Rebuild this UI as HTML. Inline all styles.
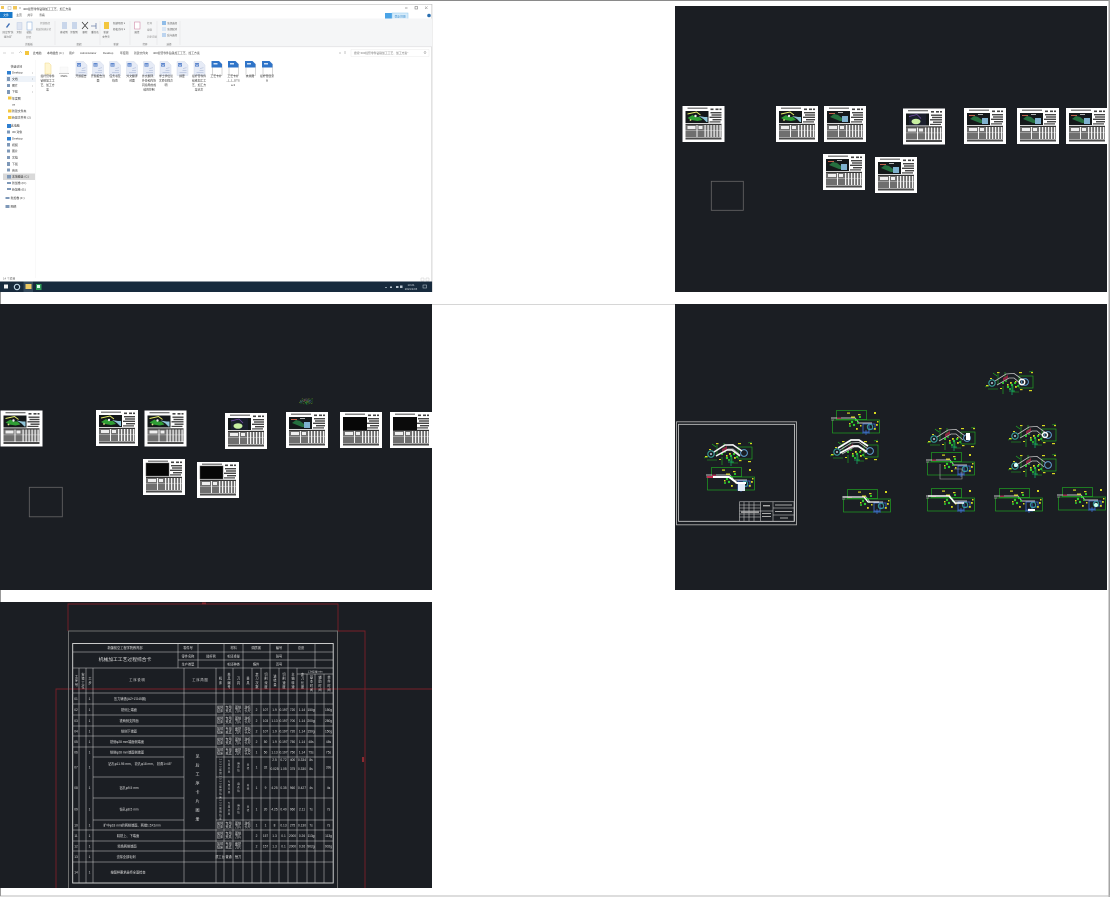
<!DOCTYPE html>
<html lang="zh">
<head>
<meta charset="utf-8">
<title>Screenshot</title>
<style>
html,body{margin:0;padding:0;background:#fff;width:1110px;height:897px;overflow:hidden}
svg{display:block;font-family:"Liberation Sans","Noto Sans CJK SC",sans-serif}
.n text{font-size:2.9px;fill:#333}
.f text{font-size:2.8px;fill:#333;text-anchor:middle}
.t text{fill:#ddd;font-size:3.2px;text-anchor:middle}
.t .s{font-size:2.5px}
.v{writing-mode:vertical-rl;text-anchor:middle;letter-spacing:1px}
</style>
</head>
<body>
<svg width="1110" height="897" viewBox="0 0 1110 897" xmlns="http://www.w3.org/2000/svg">
<defs>
<clipPath id="c2"><rect x="675" y="6" width="432" height="286"/></clipPath>
<clipPath id="c3"><rect x="0" y="304" width="432" height="286"/></clipPath>
<clipPath id="c4"><rect x="675" y="304" width="432" height="286"/></clipPath>
<clipPath id="c5"><rect x="0" y="602" width="432" height="286"/></clipPath>

<g id="card">
<rect width="42" height="36" fill="#fff"/>
<rect x="5" y="1.600" width="20" height="1.200" fill="#666"/>
<rect x="3" y="5" width="23" height="12" fill="#14181a"/>
<g fill="#444"><rect x="28" y="2.500" width="3" height="1.600"/><rect x="33" y="2.500" width="3" height="1.600"/><rect x="37" y="2.500" width="2" height="1.600"/><rect x="28" y="6" width="11" height="1.400"/><rect x="29" y="8.300" width="10" height="1.400"/><rect x="27" y="10.600" width="12" height="1.400"/><rect x="30" y="13" width="9" height="1.400"/><rect x="27" y="15.300" width="11" height="1.200"/></g>
<rect x="3" y="17.800" width="36" height="1.200" fill="#333"/>
<rect x="3" y="19" width="36" height="12" fill="#6f6f6f"/>
<rect x="5" y="20" width="8" height="3" fill="#eee"/><rect x="16" y="20" width="4" height="3" fill="#eee"/>
<g fill="#f4f4f4"><rect x="14" y="19" width="1" height="12"/><rect x="22" y="19" width="1.200" height="12"/><rect x="25" y="19" width="1.200" height="12"/><rect x="28" y="19" width="1.200" height="12"/><rect x="31" y="19" width="1.200" height="12"/><rect x="34" y="19" width="1.200" height="12"/><rect x="37" y="19" width="1.200" height="12"/><rect x="3" y="24" width="36" height=".7" opacity=".5"/></g>
<rect x="3" y="31.500" width="36" height="2" fill="#4a4a4a"/>
</g>
<g id="pa"><path d="M5 12l5-3 3 2 4 0 3 3-5 1-6-1z" fill="#2f9e35"/><path d="M5 8l9-2 4 3" stroke="#e6ef6a" stroke-width=".9" fill="none"/><path d="M16 10l5 3 3 3h1v-5h-3z" fill="#8fc4d8"/><circle cx="13" cy="10" r="1.200" fill="#eee"/><circle cx="8" cy="14" r=".9" fill="#dfe88a"/></g>
<g id="pb"><path d="M6 11l4-3 4 1 4 3 3 3h-5l-5-2z" fill="#25703f"/><rect x="18" y="10" width="6" height="6" fill="#7fb1cf"/><rect x="5" y="7" width="6" height="1" fill="#c0604a"/><rect x="14" y="6" width="5" height=".8" fill="#d8d8d8"/></g>
<g id="pc"><rect x="6" y="5" width="17" height="12" fill="#1b1f2d"/><ellipse cx="13" cy="13" rx="4.500" ry="2.800" fill="#c7eea0"/><path d="M6 8l8-2 4 4" stroke="#7a4fb0" fill="none" stroke-width=".7"/></g>

<g id="arm">
<g fill="none" stroke="#22b722" stroke-width=".6">
<rect x="34" y="6" width="14" height="12"/>
<path d="M3 19h10M13 4v10M18 16v8M8 3l4 3M44 2l4-1M0 17l4-1M20 2v6M28 16v6h6"/>
</g>
<path d="M10 11L21 4l8-.6L38 10M12 15l12-7h5l7 6" fill="none" stroke="#c2c2c2" stroke-width=".8"/>
<path d="M18 8l5-3v3l-5 3z" fill="#8a2440"/>
<circle cx="7" cy="13" r="3.200" fill="none" stroke="#3aa8a0" stroke-width="1"/><circle cx="7" cy="13" r="1" fill="#bcd"/>
<circle cx="40" cy="12" r="3.400" fill="none" stroke="#5f9fd0" stroke-width="1"/>
<g fill="#d8d820"><rect x="1" y="15" width="2.500" height="1.200"/><rect x="12" y="2" width="2.500" height="1.200"/><rect x="34" y="2" width="3" height="1.200"/><rect x="44" y="20" width="3" height="1.200"/><rect x="25" y="12" width="1.800" height="1.800"/><rect x="30" y="16" width="1.800" height="1.800"/><rect x="22" y="14" width="1.600" height="1.600"/><rect x="46" y="2" width="2" height="1.200"/><rect x="35" y="19" width="2.500" height="1.200"/><rect x="5" y="8" width="2" height="1"/><rect x="30" y="11" width="1.500" height="1.500"/><rect x="15" y="18" width="2" height="1"/></g>
<g fill="#2fd02f"><circle cx="23" cy="17" r="1.200"/><circle cx="27" cy="15" r="1.200"/><circle cx="18" cy="13" r="1.100"/><circle cx="30" cy="13" r="1.100"/><circle cx="25" cy="19" r="1"/><circle cx="33" cy="16" r="1"/><circle cx="21" cy="11" r=".9"/></g>
<path d="M27 14v11M24 21h6" stroke="#16a86a" stroke-width=".8"/>
</g>
<g id="side">
<g fill="none" stroke="#22b722" stroke-width=".6">
<rect x="4.500" y=".5" width="30" height="9"/><rect x=".5" y="10" width="47" height="13"/>
</g>
<path d="M-1 8h24l4 5h13" fill="none" stroke="#c2c2c2" stroke-width=".9"/>
<path d="M-1 10h3" stroke="#bbb" stroke-width=".6"/>
<rect x="5" y="7.500" width="4" height="1.500" fill="#a03050"/>
<path d="M31 14h6v8h-6zM37 14h6v5h-6z" fill="none" stroke="#3f6fd8" stroke-width=".8"/>
<circle cx="38" cy="17" r="2.700" fill="none" stroke="#38a8a0" stroke-width=".9"/>
<g fill="#d8d820"><rect x="15" y="2.500" width="3" height="1.200"/><rect x="19" y="6.500" width="4" height="1.200"/><rect x="42" y="2" width="2" height="2"/><rect x="26" y="4" width="2.500" height="1.200"/><rect x="44" y="14" width="1.800" height="1.800"/><rect x="42" y="18" width="1.800" height="1.800"/><rect x="24" y="18" width="1.800" height="1.800"/><rect x="28" y="15" width="1.500" height="1.500"/><rect x="17" y="13" width="1.500" height="1.500"/><rect x="45" y="11" width="1.500" height="1.500"/></g>
<g fill="#2fd02f"><circle cx="20" cy="12" r="1.200"/><circle cx="24" cy="10" r="1.200"/><circle cx="22" cy="15" r="1.200"/><circle cx="28" cy="7" r="1.100"/><circle cx="26" cy="13" r="1"/><circle cx="18" cy="16" r="1"/></g>
<path d="M34 20v5M30 23h8" stroke="#3f6fd8" stroke-width=".7"/>
</g>
<g id="doc">
<path d="M0 0h7.500l3.500 3.500V14H0z" fill="#e6ebf6" stroke="#ccd3e4" stroke-width=".4"/>
<rect x="1" y="1.500" width="4" height="3.600" fill="#5c85cc"/><path d="M1.600 2.300l.7 2.200.7-1.500.7 1.500.6-2.200" stroke="#fff" stroke-width=".3" fill="none"/>
<path d="M6 7l3.500-.8M5.500 9h4M2.500 11h7" stroke="#b7c2dc" stroke-width=".7"/>
</g>
<g id="wps">
<path d="M1 3h9.500v11.500H1z" fill="#fff" stroke="#999" stroke-width=".4"/>
<path d="M0 0h7.500l3 3v3.500H0z" fill="#2f74c8"/><rect x="2" y="2" width="4" height="1.500" fill="#cfe2f7"/>
</g>
</defs>

<rect width="1110" height="897" fill="#fff"/>
<rect x="0" y="0" width="1110" height="1" fill="#8a8a8a"/>
<rect x="1108.500" y="0" width="1.500" height="897" fill="#a5a5a5"/>
<rect x="0" y="895.500" width="1110" height="1" fill="#bbb"/>
<rect x="0" y="292" width="1" height="604" fill="#999"/>
<rect x="0" y="304" width="675" height=".8" fill="#999" opacity=".5"/>

<!-- EXPLORER -->
<g>
<rect x="0" y="4" width="432" height="288" fill="#fff"/>
<rect x="431.500" y="4" width=".8" height="278" fill="#c5c5c5"/>
<rect x="0" y="4" width="432" height=".6" fill="#bdbdbd"/>
<rect x="1" y="6" width="3" height="3" fill="#f1c75a"/><rect x="8" y="6.500" width="3" height="3" fill="none" stroke="#aaa" stroke-width=".5"/><rect x="13" y="6" width="4" height="3.500" fill="#f1c75a"/><path d="M19 8h2" stroke="#777" stroke-width=".6"/>
<text x="23" y="10" font-size="2.900" fill="#333">400摇臂零件钻铣加工工艺、加工方案</text>
<path d="M405 8h2.500" stroke="#666" stroke-width=".6"/><rect x="415" y="6.500" width="2.500" height="2.500" fill="none" stroke="#666" stroke-width=".5"/><path d="M425 6.500l2.500 2.500m0-2.500l-2.500 2.500" stroke="#666" stroke-width=".5"/>
<rect x="0" y="12" width="12.500" height="6" fill="#1979ca"/>
<text x="6" y="16" font-size="2.800" fill="#fff" text-anchor="middle">文件</text>
<g font-size="2.800" fill="#444" text-anchor="middle"><text x="19" y="16">主页</text><text x="30" y="16">共享</text><text x="42" y="16">查看</text></g>
<rect x="385" y="13" width="7" height="7" fill="#4aa3e6"/><rect x="392" y="13" width="16" height="7" fill="#d6ecfb" stroke="#8cc7ee" stroke-width=".5"/>
<text x="400" y="17.500" font-size="2.600" fill="#2a82c8" text-anchor="middle">登录/注册</text>
<circle cx="429" cy="15.500" r="1.800" fill="#2a6fb0"/>
<rect x="0" y="18.500" width="432" height="28" fill="#f5f6f7"/>
<rect x="0" y="46.500" width="432" height=".6" fill="#dadbdc"/>
<g stroke="#e0e1e2" stroke-width=".5"><path d="M55 21v24M100 21v24M130 21v24M157 21v24M180 21v24"/></g>
<path d="M6 27l3-4 1 1-3 4z" fill="#3f6fb5"/>
<rect x="17" y="22.500" width="5" height="7" fill="#dfe5f1" stroke="#b5c4de" stroke-width=".4"/>
<rect x="27" y="22" width="5" height="8" fill="#fff" stroke="#7ea3d6" stroke-width=".5"/>
<g font-size="2.500" fill="#666" text-anchor="middle"><text x="8" y="33">固定到"快</text><text x="8" y="37.500">速访问"</text><text x="19" y="33">复制</text><text x="29" y="33">粘贴</text></g>
<g font-size="2.500" fill="#888"><text x="40" y="24">复制路径</text><text x="36" y="30">粘贴快捷方式</text><text x="26" y="38">剪切</text></g>
<rect x="62" y="22" width="5" height="7" fill="#c9d6ea"/><rect x="72" y="22" width="5" height="7" fill="#c9d6ea"/>
<path d="M82 22l6 7m0-7l-6 7" stroke="#333" stroke-width=".7"/><path d="M91 26h5m0-3v6" stroke="#6b7fa8" stroke-width=".8"/>
<g font-size="2.500" fill="#555" text-anchor="middle"><text x="64" y="33">移动到</text><text x="74" y="33">复制到</text><text x="85" y="33">删除</text><text x="95" y="33">重命名</text></g>
<rect x="104" y="22" width="5" height="7" fill="#f3c63e"/>
<g font-size="2.500" fill="#555" text-anchor="middle"><text x="106" y="33">新建</text><text x="106" y="37.500">文件夹</text></g>
<g font-size="2.500" fill="#555"><text x="113" y="24">新建项目 ▾</text><text x="113" y="30">轻松访问 ▾</text></g>
<rect x="134.500" y="22" width="5.500" height="7" fill="#fff" stroke="#c79" stroke-width=".5"/>
<text x="137" y="33" font-size="2.500" fill="#555" text-anchor="middle">属性</text>
<g font-size="2.500" fill="#888"><text x="147" y="24">打开</text><text x="147" y="30.500">编辑</text><text x="147" y="37.500">历史记录</text></g>
<rect x="162" y="21" width="4" height="4" fill="#8fbce8"/><rect x="162" y="27" width="4" height="4" fill="#d8e5f4"/><rect x="162" y="33" width="4" height="4" fill="#bcd4ef"/>
<g font-size="2.500" fill="#555"><text x="167" y="24">全部选择</text><text x="167" y="30">全部取消</text><text x="167" y="36">反向选择</text></g>
<g font-size="2.500" fill="#666" text-anchor="middle"><text x="29" y="45">剪贴板</text><text x="79" y="45">组织</text><text x="116" y="45">新建</text><text x="145" y="45">打开</text><text x="169" y="45">选择</text></g>
<path d="M3 53h3M11 53h3M19 53l1.500-1.500 1.500 1.500" stroke="#aaa" stroke-width=".5" fill="none"/>
<rect x="25" y="51" width="4" height="4" fill="#f3c63e"/>
<g font-size="2.800" fill="#444"><text x="33" y="54">此电脑</text><text x="47" y="54">本地磁盘 (C:)</text><text x="69" y="54">用户</text><text x="80" y="54">Administrator</text><text x="103" y="54">Desktop</text><text x="120" y="54">年度图</text><text x="134" y="54">新建文件夹</text><text x="153" y="54">400摇臂零件钻铣加工工艺、加工方案</text></g>
<path d="M339 53h2M345 51v3" stroke="#888" stroke-width=".5"/>
<rect x="351" y="49.500" width="78" height="7" fill="#fff" stroke="#e5e5e5" stroke-width=".4"/>
<text x="354" y="54" font-size="2.800" fill="#777">搜索"400摇臂零件钻铣加工工艺、加工方案"</text>
<circle cx="425" cy="52.500" r="1" fill="none" stroke="#777" stroke-width=".4"/>
<!-- nav -->
<rect x="3" y="173.500" width="32" height="6.500" fill="#d9d9d9"/>
<rect x="6" y="76" width="30" height="6" fill="#eef3f9"/>
<g fill="#2f7fd0"><rect x="7" y="71" width="4" height="3.500"/><rect x="7" y="124" width="4" height="4"/><rect x="7" y="137" width="4" height="3.500"/></g>
<g fill="#f3c63e"><rect x="8" y="96.500" width="3.500" height="3"/><rect x="8" y="109.500" width="3.500" height="3"/><rect x="8" y="116" width="3.500" height="3"/></g>
<g fill="#7e98b8"><rect x="7" y="77" width="3" height="4"/><rect x="7" y="84" width="3" height="3"/><rect x="7" y="90" width="3" height="4"/><rect x="7" y="130.500" width="3" height="3"/><rect x="7" y="143" width="3" height="3.500"/><rect x="7" y="149.500" width="3" height="3"/><rect x="7" y="156" width="3" height="3"/><rect x="7" y="162" width="3" height="4"/><rect x="7" y="168.500" width="3" height="3"/><rect x="7" y="175" width="4" height="3.500"/><rect x="7" y="182" width="4" height="2"/><rect x="7" y="188" width="4" height="2"/><rect x="5.500" y="197" width="4" height="2"/><rect x="5.500" y="205" width="4" height="3"/></g>
<g class="n">
<text x="10.600" y="67.300">快速访问</text><text x="12" y="73.700">Desktop</text><text x="12" y="80">文档</text><text x="12" y="86.300">图片</text><text x="12" y="92.700">下载</text><text x="12" y="99.300">年度图</text><text x="12" y="105.700">os</text><text x="12" y="112">新建文件夹</text><text x="12" y="118.300">新建文件夹 (2)</text>
<text x="11" y="126.700">此电脑</text><text x="12" y="133">3D 对象</text><text x="12" y="139.700">Desktop</text><text x="12" y="146">视频</text><text x="12" y="152">图片</text><text x="12" y="158.700">文档</text><text x="12" y="165">下载</text><text x="12" y="171.300">音乐</text><text x="12" y="177.700">本地磁盘 (C:)</text><text x="12" y="184">新加卷 (D:)</text><text x="12" y="190.300">新加卷 (E:)</text><text x="10.600" y="199">新加卷 (F:)</text><text x="10.600" y="207.300">网络</text>
</g>
<path d="M32 72l1 1-1 1M32 78l1 1-1 1M32 85l1 1-1 1M32 91l1 1-1 1" stroke="#999" stroke-width=".3" fill="none"/>
<rect x="35.500" y="60" width=".4" height="218" fill="#f0f0f0"/>
<!-- file icons -->
<path d="M45 63h4l2 2v9h-6z" fill="#fff6d2" stroke="#efd88a" stroke-width=".5"/>
<rect x="59" y="73" width="10" height=".7" fill="#aaa"/><rect x="60" y="67" width="8" height="6" fill="#fafafa" stroke="#eee" stroke-width=".3"/>
<use href="#doc" x="76" y="61.500"/><use href="#doc" x="92.500" y="61.500"/><use href="#doc" x="109.500" y="61.500"/><use href="#doc" x="126.500" y="61.500"/><use href="#doc" x="143.500" y="61.500"/><use href="#doc" x="160" y="61.500"/><use href="#doc" x="177" y="61.500"/><use href="#doc" x="194" y="61.500"/>
<use href="#wps" x="211.500" y="61"/><use href="#wps" x="228" y="61"/><use href="#wps" x="245" y="61"/><use href="#wps" x="262" y="61"/>
<g class="f">
<text x="47.500" y="77">摇杆臂零件</text><text x="47.500" y="81.500">钻铣加工工</text><text x="47.500" y="86">艺、加工方</text><text x="47.500" y="90.500">案</text>
<text x="64" y="77">DWG</text>
<text x="81" y="77">开题报告</text>
<text x="98" y="77">开题报告封</text><text x="98" y="81.500">面</text>
<text x="115" y="77">任务书及</text><text x="115" y="81.500">指南</text>
<text x="132" y="77">外文翻译</text><text x="132" y="81.500">封面</text>
<text x="149" y="77">外文翻译、</text><text x="149" y="81.500">外协和内协</text><text x="149" y="86">同指导的成</text><text x="149" y="90.500">绩的控制</text>
<text x="166" y="77">学士学位论</text><text x="166" y="81.500">文原创性声</text><text x="166" y="86">明</text>
<text x="182" y="77">摘要</text>
<text x="199" y="77">摇杆臂零件</text><text x="199" y="81.500">钻铣加工工</text><text x="199" y="86">艺、加工方</text><text x="199" y="90.500">案论文</text>
<text x="216" y="77">工艺卡片</text>
<text x="233" y="77">工艺卡片</text><text x="233" y="81.500">_1_1_DTS</text><text x="233" y="86">a-3</text>
<text x="250" y="77">夹具图</text>
<text x="267" y="77">摇杆臂目录</text><text x="267" y="81.500">B</text>
</g>
<text x="3" y="279.500" font-size="2.800" fill="#666">14 个项目</text>
<path d="M421 278h3v3h-3zM426 278h3v3h-3z" fill="none" stroke="#bbb" stroke-width=".4"/>
<!-- taskbar -->
<rect x="0" y="281.500" width="432" height="10.500" fill="#172a3d"/>
<rect x="23.500" y="281.500" width="9.500" height="10.500" fill="#33495c"/>
<rect x="4" y="284.500" width="4" height="4" fill="#f2f2f2"/>
<circle cx="17" cy="287" r="2.700" fill="none" stroke="#cfe6f5" stroke-width="1"/>
<rect x="25.500" y="284" width="6" height="5" fill="#ecc964"/>
<rect x="36" y="284" width="5.500" height="6" fill="#2e9a58"/><rect x="37" y="285" width="3" height="3" fill="#dfe"/>
<g fill="#b9c4cf"><rect x="385" y="287" width="2" height=".7"/><rect x="390" y="286.500" width="2" height="1.500"/><rect x="396" y="286" width="2.500" height="2"/><rect x="400" y="285.500" width="2.500" height="2.500"/></g>
<text x="411" y="286" font-size="2.800" fill="#d5dde4" text-anchor="middle">13:21</text>
<text x="411" y="290" font-size="2.800" fill="#d5dde4" text-anchor="middle">2021/1/15</text>
<rect x="423" y="285" width="3.500" height="3" fill="none" stroke="#c5d0da" stroke-width=".5"/>
<rect x="432" y="281.500" width=".6" height="10.500" fill="#ccc"/>
</g>

<!-- PANEL 2 -->
<rect x="675" y="6" width="432" height="286" fill="#1b1e23"/>
<g clip-path="url(#c2)">
<rect x="711.300" y="181.300" width="32" height="29" fill="none" stroke="#666" stroke-width=".8"/>
<use href="#card" x="682.500" y="106"/><use href="#pa" x="682.500" y="106"/>
<use href="#card" x="776" y="106"/><use href="#pa" x="776" y="106"/>
<use href="#card" x="824" y="106"/><use href="#pb" x="824" y="106"/>
<use href="#card" x="903" y="108.500"/><use href="#pc" x="903" y="108.500"/>
<use href="#card" x="964" y="108"/><use href="#pb" x="964" y="108"/>
<use href="#card" x="1017" y="108"/><use href="#pb" x="1017" y="108"/>
<use href="#card" x="1066" y="108"/><use href="#pb" x="1066" y="108"/>
<use href="#card" x="823" y="154"/><use href="#pb" x="823" y="154"/>
<use href="#card" x="875" y="157"/><use href="#pb" x="875" y="157"/>
</g>

<!-- PANEL 3 -->
<rect x="0" y="304" width="432" height="286" fill="#1b1e23"/>
<g clip-path="url(#c3)">
<rect x="29.300" y="487.300" width="33" height="29.500" fill="none" stroke="#666" stroke-width=".8"/>
<use href="#card" x="0.500" y="410.500"/><use href="#pa" x="0.500" y="410.500"/>
<use href="#card" x="96" y="410"/><use href="#pa" x="96" y="410"/>
<use href="#card" x="144.500" y="410.500"/><use href="#pa" x="144.500" y="410.500"/>
<use href="#card" x="225" y="413"/><use href="#pc" x="225" y="413"/>
<use href="#card" x="286" y="412"/><use href="#pb" x="286" y="412"/>
<use href="#card" x="340" y="412"/><rect x="343" y="417" width="24" height="13" fill="#070707"/>
<use href="#card" x="390" y="412"/><rect x="393" y="417" width="24" height="13" fill="#0b0b0b"/>
<use href="#card" x="143" y="459"/><rect x="146" y="463" width="23" height="13" fill="#070707" stroke="#555" stroke-width=".5"/>
<use href="#card" x="197" y="462"/><rect x="200" y="466" width="23" height="13" fill="#070707" stroke="#555" stroke-width=".5"/>
<g transform="translate(299 398) scale(.28)"><use href="#arm"/></g>
</g>

<!-- PANEL 4 -->
<rect x="675" y="304" width="432" height="286" fill="#1b1e23"/>
<g clip-path="url(#c4)">
<rect x="676.500" y="421.800" width="120" height="103" fill="none" stroke="#aaa" stroke-width=".9"/>
<rect x="678.500" y="424.300" width="116" height="97" fill="none" stroke="#d4d4d4" stroke-width=".8"/>
<use href="#arm" x="704" y="441"/>
<path d="M714 452l11-7h8l9 6M716 456l11-6h5l8 6" fill="none" stroke="#f2f2f2" stroke-width="1.500"/>
<use href="#side" x="707" y="467"/>
<path d="M707 477h22l8 6h9" fill="none" stroke="#fff" stroke-width="2"/>
<rect x="707" y="476" width="6" height="2" fill="#c03050"/>
<rect x="738" y="484" width="7" height="7" fill="#dfe9f5"/>
<g stroke="#ddd" stroke-width=".5" fill="none">
<rect x="739.500" y="501.800" width="54.500" height="19.500"/>
<path d="M739.500 505h21M739.500 508h21M739.500 511h21M739.500 514h21M739.500 517h21M744 501.800v19.500M749 501.800v19.500M754 501.800v19.500M760.500 501.800v19.500M773 501.800v19.500M773 508h21M773 515h21M760.500 511h12.500"/>
</g>
<g fill="#aaa"><rect x="775" y="504.500" width="17" height="1"/><rect x="775" y="511" width="17" height="1"/><rect x="780" y="517.500" width="8" height="1"/><rect x="763" y="505" width="7" height="1.400"/><rect x="762" y="513" width="9" height="1"/><rect x="762" y="516" width="9" height="1"/><rect x="741" y="511.500" width="18" height="1.400"/></g>
<use href="#arm" x="985" y="370"/><circle cx="1022" cy="382" r="2.700" fill="none" stroke="#fff" stroke-width="1.500"/>
<use href="#arm" x="927" y="426"/><rect x="966" y="433" width="4" height="7" fill="#fff"/>
<use href="#arm" x="1008" y="423"/><circle cx="1045" cy="435" r="2.500" fill="none" stroke="#fff" stroke-width="1.500"/>
<use href="#arm" x="1008" y="453"/><circle cx="1016" cy="465" r="2" fill="#dff"/>
<use href="#arm" x="830" y="439"/>
<path d="M838 448l13-8h8l9 6M840 453l13-7h5l9 6" fill="none" stroke="#fff" stroke-width="1.800"/>
<use href="#side" x="832" y="410"/>
<use href="#side" x="927" y="452"/><path d="M940 464v15h22v-10h-8" fill="none" stroke="#aaa" stroke-width=".6"/>
<use href="#side" x="843" y="489"/><path d="M843 497h21l4 5h11" fill="none" stroke="#fff" stroke-width="1.300"/>
<use href="#side" x="927" y="488"/><path d="M928 496h21l6 7h9" fill="none" stroke="#fff" stroke-width="1.500"/>
<use href="#side" x="995" y="488"/><rect x="1028" y="509" width="7" height="2" fill="#fff"/>
<use href="#side" x="1058" y="487"/><circle cx="1096" cy="505" r="2" fill="#cfe"/>
</g>

<!-- PANEL 5 -->
<rect x="0" y="602" width="432" height="286" fill="#1b1e23"/>
<g clip-path="url(#c5)">
<g fill="none" stroke="#7a2028" stroke-width=".9">
<path d="M68 631V604H338V631H365V888"/>
<path d="M56 888V689H432"/>
</g>
<rect x="202" y="602.500" width="4" height="2" fill="#8a2a30"/>
<rect x="362" y="757" width="2" height="5" fill="#8a2a30"/>
<rect x="68.500" y="631" width="269" height="258" fill="none" stroke="#777" stroke-width=".9"/>
<rect x="72.700" y="643.500" width="260.500" height="239.500" fill="none" stroke="#ddd" stroke-width=".9"/>
<g stroke="#cfcfcf" stroke-width=".5" fill="none">
<path d="M72.700 652H178M178 652h155M178 660h155M72.700 668H333"/>
<path d="M178 643.500V668M198 643.500V668M224 643.500V668M243 643.500V668M270 643.500V668M288 643.500V668M315 643.500V668"/>
<path d="M72.700 693H333M72.700 704H333M72.700 715H333M72.700 726H333M72.700 736H333M72.700 747H333M93 757H184M216 757H333M93 777H184M216 777H333M93 798H184M216 798H333M93 820H184M216 820H333M72.700 830H333M72.700 841H333M72.700 851H333M72.700 862H333"/>
<path d="M79 668V883M86 668V883M93 668V883M184 668V883M216 668V883M224 668V883M233 668V883M243 668V883M252 668V883M261 668V883M270 668V883M279 668V883M288 668V883M297 668V883M307 674V883M315 674V883M324 674V883"/>
<path d="M297 674H333"/>
</g>
<g class="t">
<text x="125" y="649">新疆航空工程学院教育部</text>
<text x="125" y="661" style="font-size:4.800px">机械加工工艺过程综合卡</text>
<text x="188" y="649">零件号</text><text x="188" y="657.500">零件名称</text><text x="188" y="665.500">生产类型</text>
<text x="211" y="657.500">摇杆臂</text>
<text x="233.500" y="649">材料</text><text x="233.500" y="657.500">毛坯重量</text><text x="233.500" y="665.500">毛坯种类</text>
<text x="256" y="649">调质钢</text><text x="256" y="665.500">铸件</text>
<text x="279" y="649">編号</text><text x="279" y="657.500">张号</text><text x="279" y="665.500">页号</text>
<text x="301" y="649">总张</text>
<text x="137" y="681">工 序 说 明</text><text x="200" y="681">工 序 简 图</text>
<text x="315" y="672.500" class="s">工时定额 min</text>
<text class="v" x="76" y="681">工序号</text><text class="v" x="82.500" y="681">安装工位</text><text class="v" x="89.500" y="681">工步</text>
<text class="v" x="220" y="681">机床</text><text class="v" x="228.500" y="681">夹具编号</text><text class="v" x="238" y="681">刀具</text><text class="v" x="247.500" y="681">量具</text>
<text class="v" x="256.500" y="681">走刀次数</text><text class="v" x="265.500" y="681">切削深度</text><text class="v" x="274.500" y="681">进给量</text><text class="v" x="283.500" y="681">切削速度</text><text class="v" x="292.500" y="681">主轴转速</text><text class="v" x="302" y="681">走刀长度</text>
<text class="v" x="311" y="684">基本时间</text><text class="v" x="319.500" y="684">辅助时间</text><text class="v" x="328.500" y="684">单件时间</text>
<text class="v" x="198" y="790" style="letter-spacing:5px;font-size:4px">见后工序卡片图册</text>

<text x="76" y="700">01</text><text x="89.500" y="700">1</text><text x="130" y="700">压力铸造(AZ+ZG45钢)</text>
<text x="76" y="711">02</text><text x="89.500" y="711">1</text><text x="129" y="711">铣侧上端面</text>
<text x="76" y="722">03</text><text x="89.500" y="722">1</text><text x="129" y="722">铣两侧支撑面</text>
<text x="76" y="732.500">04</text><text x="89.500" y="732.500">1</text><text x="129" y="732.500">铣侧下端面</text>
<text x="76" y="743">05</text><text x="89.500" y="743">1</text><text x="127" y="743">铣侧φ28 mm端面侧端面</text>
<text x="76" y="753.500">06</text><text x="89.500" y="753.500">1</text><text x="127" y="753.500">铣侧φ28 mm端面侧端面</text>
<text x="76" y="768.500">07</text><text x="89.500" y="768.500">1</text><text x="140" y="765">钻孔φ11.95 mm、 铰孔φ18 mm、 铰角1×45°</text>
<text x="76" y="789">08</text><text x="89.500" y="789">1</text><text x="129" y="789">钻孔φ9.5 mm</text>
<text x="76" y="810.500">09</text><text x="89.500" y="810.500">1</text><text x="129" y="810.500">钻孔φ8.5 mm</text>
<text x="76" y="826.500">10</text><text x="89.500" y="826.500">1</text><text x="132" y="826.500">扩中φ18 mm的两侧端面、两端1.5X1mm</text>
<text x="76" y="837">11</text><text x="89.500" y="837">1</text><text x="128" y="837">精铣上、下端面</text>
<text x="76" y="847.500">12</text><text x="89.500" y="847.500">1</text><text x="127" y="847.500">精铣两侧端面</text>
<text x="76" y="858">13</text><text x="89.500" y="858">1</text><text x="126" y="858">去除全部毛刺</text>
<text x="76" y="873.500">14</text><text x="89.500" y="873.500">1</text><text x="128" y="873.500">按图样要求最终全面检查</text>

<g class="s">
<text x="220" y="708.500">摇臂</text><text x="220" y="712">钻床</text><text x="228.500" y="708.500">专用</text><text x="228.500" y="712">夹具</text><text x="238" y="708.500">面铣</text><text x="238" y="712">刀片</text><text x="247.500" y="708.500">游标</text><text x="247.500" y="712">卡尺</text>
<text x="220" y="719.500">摇臂</text><text x="220" y="723">钻床</text><text x="228.500" y="719.500">专用</text><text x="228.500" y="723">夹具</text><text x="238" y="719.500">面铣</text><text x="238" y="723">刀片</text><text x="247.500" y="719.500">游标</text><text x="247.500" y="723">卡尺</text>
<text x="220" y="730">摇臂</text><text x="220" y="733.500">钻床</text><text x="228.500" y="730">专用</text><text x="228.500" y="733.500">夹具</text><text x="238" y="730">面铣</text><text x="238" y="733.500">刀片</text><text x="247.500" y="730">游标</text><text x="247.500" y="733.500">卡尺</text>
<text x="220" y="740.500">摇臂</text><text x="220" y="744">钻床</text><text x="228.500" y="740.500">专用</text><text x="228.500" y="744">夹具</text><text x="238" y="740.500">面铣</text><text x="238" y="744">刀片</text><text x="247.500" y="740.500">游标</text><text x="247.500" y="744">卡尺</text>
<text x="220" y="751">摇臂</text><text x="220" y="754.500">钻床</text><text x="228.500" y="751">专用</text><text x="228.500" y="754.500">夹具</text><text x="238" y="751">面铣</text><text x="238" y="754.500">刀片</text><text x="247.500" y="751">游标</text><text x="247.500" y="754.500">卡尺</text>
<text x="220" y="834.500">摇臂</text><text x="220" y="838">钻床</text><text x="228.500" y="834.500">专用</text><text x="228.500" y="838">夹具</text><text x="238" y="834.500">面铣</text><text x="238" y="838">刀片</text>
<text x="220" y="845">摇臂</text><text x="220" y="848.500">钻床</text><text x="228.500" y="845">专用</text><text x="228.500" y="848.500">夹具</text><text x="238" y="845">面铣</text><text x="238" y="848.500">刀片</text>
<text x="220" y="858">质工台</text><text x="228.500" y="858">普通</text><text x="238" y="858">锉刀</text>
<text x="220" y="824.500">摇臂</text><text x="220" y="828">钻床</text><text x="228.500" y="824.500">专用</text><text x="228.500" y="828">夹具</text><text x="238" y="824.500">面铣</text><text x="238" y="828">刀片</text><text x="247.500" y="824.500">游标</text><text x="247.500" y="828">卡尺</text>
</g>
<text class="v s" x="220" y="767">Z535摇臂</text><text class="v s" x="228.500" y="767">专用夹具</text><text class="v s" x="238" y="767">麻花钻</text><text class="v s" x="247.500" y="767">内径</text>
<text class="v s" x="220" y="787.500">Z535摇臂钻床</text><text class="v s" x="228.500" y="787.500">专用夹具</text><text class="v s" x="238" y="787.500">麻花钻</text><text class="v s" x="247.500" y="787.500">内径</text>
<text class="v s" x="220" y="809">Z535摇臂钻床</text><text class="v s" x="228.500" y="809">专用夹具</text><text class="v s" x="238" y="809">麻花钻</text><text class="v s" x="247.500" y="809">内径</text>

<g class="s">
<text x="256.500" y="711">2</text><text x="265.500" y="711">107</text><text x="274.500" y="711">1.9</text><text x="283.500" y="711">0.197</text><text x="292.500" y="711">720</text><text x="302" y="711">1.14</text><text x="311" y="711">150g</text><text x="328.500" y="711">150g</text>
<text x="256.500" y="722">2</text><text x="265.500" y="722">103</text><text x="274.500" y="722">1.13</text><text x="283.500" y="722">0.197</text><text x="292.500" y="722">700</text><text x="302" y="722">1.14</text><text x="311" y="722">200g</text><text x="328.500" y="722">280g</text>
<text x="256.500" y="732.500">2</text><text x="265.500" y="732.500">107</text><text x="274.500" y="732.500">1.9</text><text x="283.500" y="732.500">0.197</text><text x="292.500" y="732.500">720</text><text x="302" y="732.500">1.14</text><text x="311" y="732.500">150g</text><text x="328.500" y="732.500">150g</text>
<text x="256.500" y="743">2</text><text x="265.500" y="743">50</text><text x="274.500" y="743">1.9</text><text x="283.500" y="743">0.197</text><text x="292.500" y="743">750</text><text x="302" y="743">1.14</text><text x="311" y="743">48s</text><text x="328.500" y="743">48s</text>
<text x="256.500" y="753.500">1</text><text x="265.500" y="753.500">50</text><text x="274.500" y="753.500">1.13</text><text x="283.500" y="753.500">0.197</text><text x="292.500" y="753.500">750</text><text x="302" y="753.500">1.14</text><text x="311" y="753.500">75s</text><text x="328.500" y="753.500">75s</text>
<text x="256.500" y="768.500">1</text><text x="265.500" y="768.500">32</text><text x="274.500" y="761">2.5</text><text x="283.500" y="761">0.72</text><text x="292.500" y="761">400</text><text x="302" y="761">0.334</text><text x="311" y="761">8s</text><text x="274.500" y="770">0.025</text><text x="283.500" y="770">1.05</text><text x="292.500" y="770">375</text><text x="302" y="770">0.330</text><text x="311" y="770">8s</text><text x="328.500" y="768.500">39s</text>
<text x="256.500" y="789">1</text><text x="265.500" y="789">9</text><text x="274.500" y="789">4.25</text><text x="283.500" y="789">0.35</text><text x="292.500" y="789">960</text><text x="302" y="789">0.427</text><text x="311" y="789">4s</text><text x="328.500" y="789">4s</text>
<text x="256.500" y="810.500">1</text><text x="265.500" y="810.500">20</text><text x="274.500" y="810.500">4.25</text><text x="283.500" y="810.500">0.40</text><text x="292.500" y="810.500">960</text><text x="302" y="810.500">2.11</text><text x="311" y="810.500">7s</text><text x="328.500" y="810.500">7s</text>
<text x="256.500" y="826.500">1</text><text x="265.500" y="826.500">1</text><text x="274.500" y="826.500">8</text><text x="283.500" y="826.500">0.13</text><text x="292.500" y="826.500">275</text><text x="302" y="826.500">0.130</text><text x="311" y="826.500">7s</text><text x="328.500" y="826.500">7s</text>
<text x="256.500" y="837">2</text><text x="265.500" y="837">157</text><text x="274.500" y="837">1.3</text><text x="283.500" y="837">0.1</text><text x="292.500" y="837">2000</text><text x="302" y="837">0.26</text><text x="311" y="837">113g</text><text x="328.500" y="837">113g</text>
<text x="256.500" y="847.500">2</text><text x="265.500" y="847.500">157</text><text x="274.500" y="847.500">1.3</text><text x="283.500" y="847.500">0.1</text><text x="292.500" y="847.500">2000</text><text x="302" y="847.500">0.26</text><text x="311" y="847.500">902g</text><text x="328.500" y="847.500">902g</text>
</g>
</g>
</g>
</svg>
</body>
</html>
